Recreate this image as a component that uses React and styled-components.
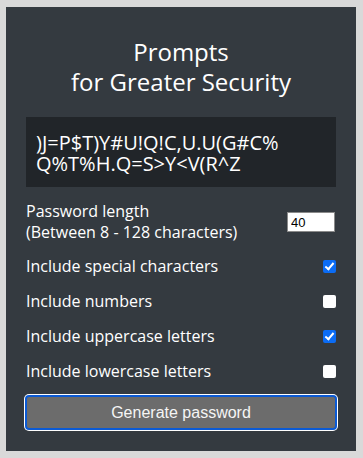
import React from "react";
import styled, { createGlobalStyle } from "styled-components";

const GlobalStyle = createGlobalStyle`
  html, body {
    margin: 0;
    padding: 0;
    background: #d9d9d9;
  }
  * {
    box-sizing: border-box;
  }
`;

const Card = styled.div`
  margin: 7px 0 0 6px;
  width: 350px;
  height: 444px;
  padding: 30px 20px 19px;
  background: #343a40;
  color: #ffffff;
  font-family: "Open Sans", Lato, sans-serif;
  display: flex;
  flex-direction: column;
`;

const Title = styled.h1`
  margin: 0;
  font-size: 24px;
  line-height: 30px;
  font-weight: 400;
  text-align: center;
`;

const PasswordBox = styled.div`
  margin-top: 20px;
  height: 70px;
  padding: 15px 10px 0;
  background: #212529;
  font-size: 20px;
  line-height: 21px;
  white-space: pre-line;
`;

const Form = styled.div`
  margin-top: 14px;
  display: flex;
  flex-direction: column;
  gap: 16px;
  font-size: 16px;
  line-height: 19px;
`;

const Row = styled.label`
  display: flex;
  align-items: center;
  justify-content: space-between;
  line-height: ${(p) => (p.$tall ? "21px" : "19px")};
  margin-bottom: ${(p) => (p.$tall ? "-2px" : "0")};
`;

const NumberInput = styled.input`
  width: 48px;
  height: 20px;
  padding: 0 3px;
  margin: 0 1px 0 0;
  border: 1px solid #8a8a8a;
  background: #ffffff;
  font-family: "Liberation Sans", Arial, sans-serif;
  font-size: 13px;
  color: #000;
  outline: none;
`;

const Check = styled.input`
  appearance: none;
  width: 13px;
  height: 13px;
  margin: 0;
  border-radius: 2px;
  background: ${(p) => (p.checked ? "#0b6cf5" : "#ffffff")};
  position: relative;

  &::after {
    content: "";
    display: ${(p) => (p.checked ? "block" : "none")};
    position: absolute;
    left: 4px;
    top: 1px;
    width: 3px;
    height: 7px;
    border: solid #fff;
    border-width: 0 2px 2px 0;
    transform: rotate(40deg);
  }
`;

const Button = styled.button`
  margin: 14px -1px 0;
  height: 35px;
  border: 2px solid #0b5ad4;
  border-radius: 4px;
  box-shadow: 0 0 0 1px #ffffff;
  background: #6c6c6c;
  color: #f5f5f5;
  font-family: "Liberation Sans", Arial, sans-serif;
  font-size: 16px;
  cursor: pointer;
`;

const options = [
  { label: "Include special characters", checked: true },
  { label: "Include numbers", checked: false },
  { label: "Include uppercase letters", checked: true },
  { label: "Include lowercase letters", checked: false },
];

export default function App() {
  return (
    <>
      <GlobalStyle />
      <Card>
        <Title>
          Prompts
          <br />
          for Greater Security
        </Title>
        <PasswordBox>{")J=P$T)Y#U!Q!C,U.U(G#C%\nQ%T%H.Q=S>Y<V(R^Z"}</PasswordBox>
        <Form>
          <Row $tall>
            <span>
              Password length
              <br />
              (Between 8 - 128 characters)
            </span>
            <NumberInput type="text" defaultValue="40" />
          </Row>
          {options.map((o) => (
            <Row key={o.label}>
              <span>{o.label}</span>
              <Check type="checkbox" checked={o.checked} readOnly />
            </Row>
          ))}
        </Form>
        <Button>Generate password</Button>
      </Card>
    </>
  );
}
